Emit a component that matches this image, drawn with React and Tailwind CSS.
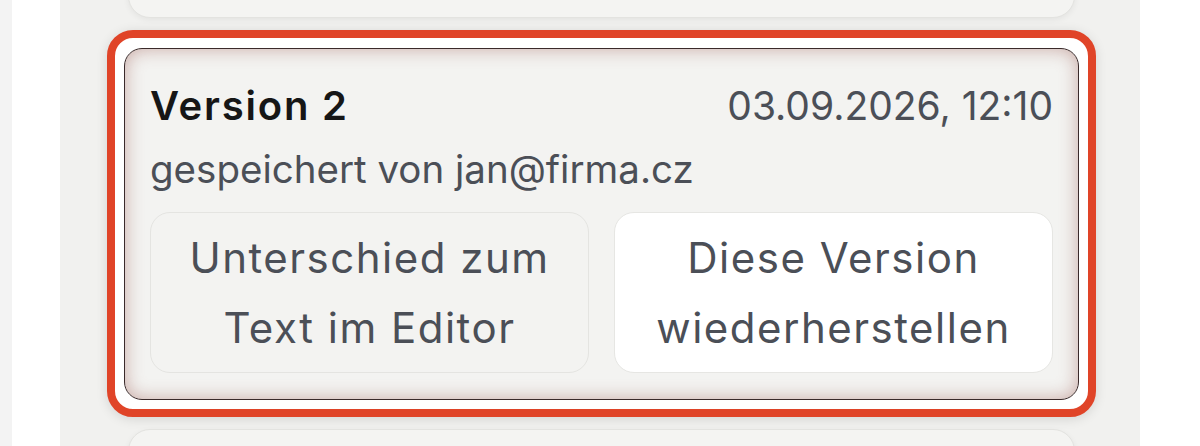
import React from 'react'

export default function App() {
  return (
    <div className="flex h-[446px] w-[1200px] overflow-hidden bg-white font-['Inter',sans-serif]">
      <div className="w-3 bg-[#f3f3f3]" />
      <div className="w-12 bg-white" />

      <div className="flex w-[1080px] flex-col gap-3 bg-[#f1f1ef] pl-[68px] pr-[65px]">
        <div className="-mt-[42px] h-[60px] shrink-0 rounded-[22px] border border-[#e3e3e0] bg-[#f4f4f2] shadow-[0_2px_6px_rgba(0,0,0,0.06)]" />

        <div className="-ml-[21px] -mr-[21px] shrink-0 rounded-[26px] border-[8px] border-[#e04428] bg-white px-[9px] pb-[9px] pt-[10px] shadow-[0_2px_12px_rgba(0,0,0,0.12)]">
          <div className="rounded-[18px] border border-[#3a2a2a] bg-[#f3f3f1] px-[25px] pb-[26px] pt-[24px] shadow-[inset_0_0_18px_rgba(150,80,70,0.45)]">
            <div className="flex h-[66px] items-center justify-between">
              <h3 className="text-[40px] font-semibold leading-[66px] tracking-[1.8px] text-[#161616]">Version 2</h3>
              <span className="text-[39px] leading-[66px] text-[#4b4f57]">03.09.2026, 12:10</span>
            </div>
            <p className="text-[38.5px] leading-[60px] text-[#4b4f57]">gespeichert von jan@firma.cz</p>
            <div className="mt-[13px] grid grid-cols-2 gap-[25px]">
              <button className="flex h-[161px] items-center justify-center rounded-[20px] border-[1.5px] border-[#e4e4e1] bg-[#f3f3f1] text-[42px] leading-[70px] tracking-[1.5px] text-[#4b4f57]">
                Unterschied zum<br />Text im Editor
              </button>
              <button className="flex h-[161px] items-center justify-center rounded-[20px] border-[1.5px] border-[#e6e6e3] bg-white text-[42px] leading-[70px] tracking-[1.5px] text-[#4b4f57]">
                Diese Version<br />wiederherstellen
              </button>
            </div>
          </div>
        </div>

        <div className="h-[60px] shrink-0 rounded-[22px] border border-[#e3e3e0] bg-[#f4f4f2] shadow-[0_2px_6px_rgba(0,0,0,0.06)]" />
      </div>

      <div className="flex-1 bg-white" />
    </div>
  )
}
